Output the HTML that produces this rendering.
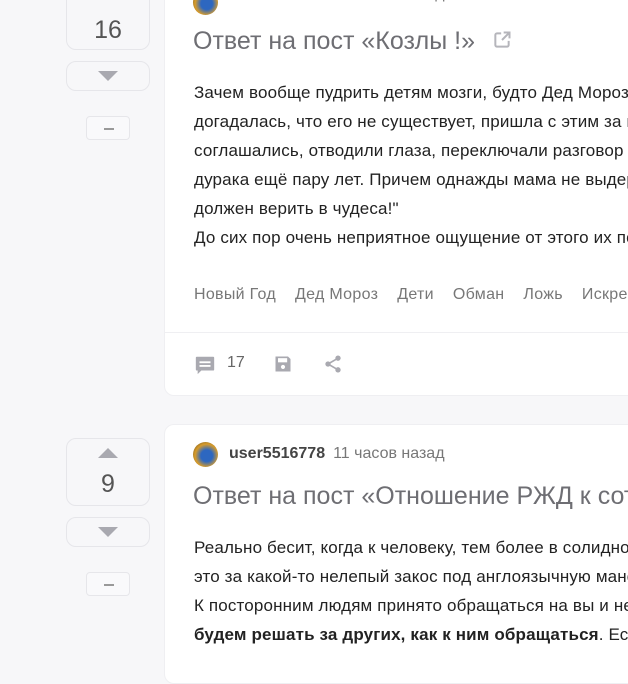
<!DOCTYPE html>
<html><head><meta charset="utf-8"><style>
*{margin:0;padding:0;box-sizing:border-box}
body{width:628px;height:660px;overflow:hidden;background:#f7f7f9;font-family:"Liberation Sans",Arial,sans-serif;position:relative}
.box{position:absolute;border:1px solid #e6e6ea;border-radius:10px;background:#f7f7f9}
.num{position:absolute;width:84px;text-align:center;font-size:25px;color:#555}
.tri-up{position:absolute;width:0;height:0;border-left:10px solid transparent;border-right:10px solid transparent;border-bottom:10px solid #a9a9b0}
.tri-dn{position:absolute;width:0;height:0;border-left:10px solid transparent;border-right:10px solid transparent;border-top:10px solid #a9a9b0}
.minus{position:absolute;width:44px;height:24px;border:1px solid #e6e6ea;border-radius:4px;background:#f9f9fb}
.minus:after{content:"";position:absolute;left:17px;top:11px;width:10px;height:1.5px;background:#999}
.card{position:absolute;left:164px;width:480px;background:#fff;border-radius:10px;border:1px solid #efeff2;overflow:hidden}
.user{position:absolute;left:28px;font-size:16px;color:#333;white-space:nowrap}
.user b{font-weight:bold;color:#444}
.user span{color:#777;margin-left:8px}
.av{position:absolute;left:28px;width:25px;height:25px;border-radius:50%;background:radial-gradient(circle at 55% 55%,#2d67c0 30%,#d79b2a 60%,#4a3a1a)}
.title{position:absolute;left:28px;font-size:25px;color:#6e6e73;white-space:nowrap}
.text{position:absolute;left:29px;font-size:17px;letter-spacing:0.15px;line-height:29px;color:#222;white-space:nowrap}
.tags{position:absolute;left:29px;font-size:16px;letter-spacing:0.3px;color:#777;white-space:nowrap}
.tags span{margin-right:19px}
</style></head><body>

<div class="box" style="left:66px;top:-20px;width:84px;height:70px"></div>
<div class="num" style="left:66px;top:16px">16</div>
<div class="box" style="left:66px;top:61px;width:84px;height:30px"></div>
<div class="tri-dn" style="left:98px;top:71px"></div>
<div class="minus" style="left:86px;top:116px"></div>

<div class="card" style="top:-20px;height:416px">
  <div class="av" style="top:9px"></div>
  <div class="user" style="left:64px;top:4px"><b>user5516778</b><span>11 часов назад</span></div>
  <div class="title" style="top:46px">Ответ на пост «Козлы !»
    <svg width="20" height="20" viewBox="0 0 24 24" style="margin-left:10px;vertical-align:-1px"><path d="M11 4H6a2 2 0 0 0-2 2v12a2 2 0 0 0 2 2h12a2 2 0 0 0 2-2v-5" fill="none" stroke="#b5b5bb" stroke-width="2.4"/><path d="M14 3h7v7M21 3l-9 9" fill="none" stroke="#b5b5bb" stroke-width="2.4"/></svg>
  </div>
  <div class="text" style="top:97px">Зачем вообще пудрить детям мозги, будто Дед Мороз существует? Когда я<br>догадалась, что его не существует, пришла с этим за подтверждением к родителям,<br>соглашались, отводили глаза, переключали разговор на другие темы, и я ходила<br>дурака ещё пару лет. Причем однажды мама не выдержала и сказала: "Ребёнок<br>должен верить в чудеса!"<br>До сих пор очень неприятное ощущение от этого их поведения.</div>
  <div class="tags" style="top:305px"><span>Новый Год</span><span>Дед Мороз</span><span>Дети</span><span>Обман</span><span>Ложь</span><span>Искренность</span></div>
  <div style="position:absolute;left:0;right:0;top:351px;border-top:1px solid #efeff2"></div>
  <svg style="position:absolute;left:29px;top:373px" width="22" height="22" viewBox="0 0 24 24"><path d="M3 3h18a1 1 0 0 1 1 1v13a1 1 0 0 1-1 1H8l-4 4v-4H3a1 1 0 0 1-1-1V4a1 1 0 0 1 1-1z" fill="#a9a9b0"/><rect x="6" y="8" width="12" height="2" fill="#fff"/><rect x="6" y="12" width="12" height="2" fill="#fff"/></svg>
  <div style="position:absolute;left:62px;top:373px;font-size:16px;color:#666">17</div>
  <svg style="position:absolute;left:108px;top:373px" width="20" height="20" viewBox="0 0 24 24"><path d="M3 3h15l3 3v15H3z" fill="#a9a9b0"/><rect x="6" y="5" width="11" height="5" fill="#fff"/><circle cx="12" cy="15.5" r="2.5" fill="#fff"/></svg>
  <svg style="position:absolute;left:158px;top:373px" width="20" height="20" viewBox="0 0 24 24"><circle cx="18" cy="5" r="3.2" fill="#a9a9b0"/><circle cx="6" cy="12" r="3.2" fill="#a9a9b0"/><circle cx="18" cy="19" r="3.2" fill="#a9a9b0"/><path d="M18 5L6 12l12 7" fill="none" stroke="#a9a9b0" stroke-width="2"/></svg>
</div>

<div class="box" style="left:66px;top:438px;width:84px;height:68px"></div>
<div class="tri-up" style="left:98px;top:448px"></div>
<div class="num" style="left:66px;top:470px">9</div>
<div class="box" style="left:66px;top:517px;width:84px;height:30px"></div>
<div class="tri-dn" style="left:98px;top:527px"></div>
<div class="minus" style="left:86px;top:572px"></div>

<div class="card" style="top:424px;height:260px">
  <div class="av" style="top:17px"></div>
  <div class="user" style="left:64px;top:20px"><b>user5516778</b><span>11 часов назад</span></div>
  <div class="title" style="top:57px">Ответ на пост «Отношение РЖД к сотрудникам»</div>
  <div class="text" style="top:108px">Реально бесит, когда к человеку, тем более в солидном возрасте, обращаются на ты,<br>это за какой-то нелепый закос под англоязычную манеру общения.<br>К посторонним людям принято обращаться на вы и не нам это менять,<br><b>будем решать за других, как к ним обращаться</b>. Если человек хочет на ты</div>
</div>
</body></html>
